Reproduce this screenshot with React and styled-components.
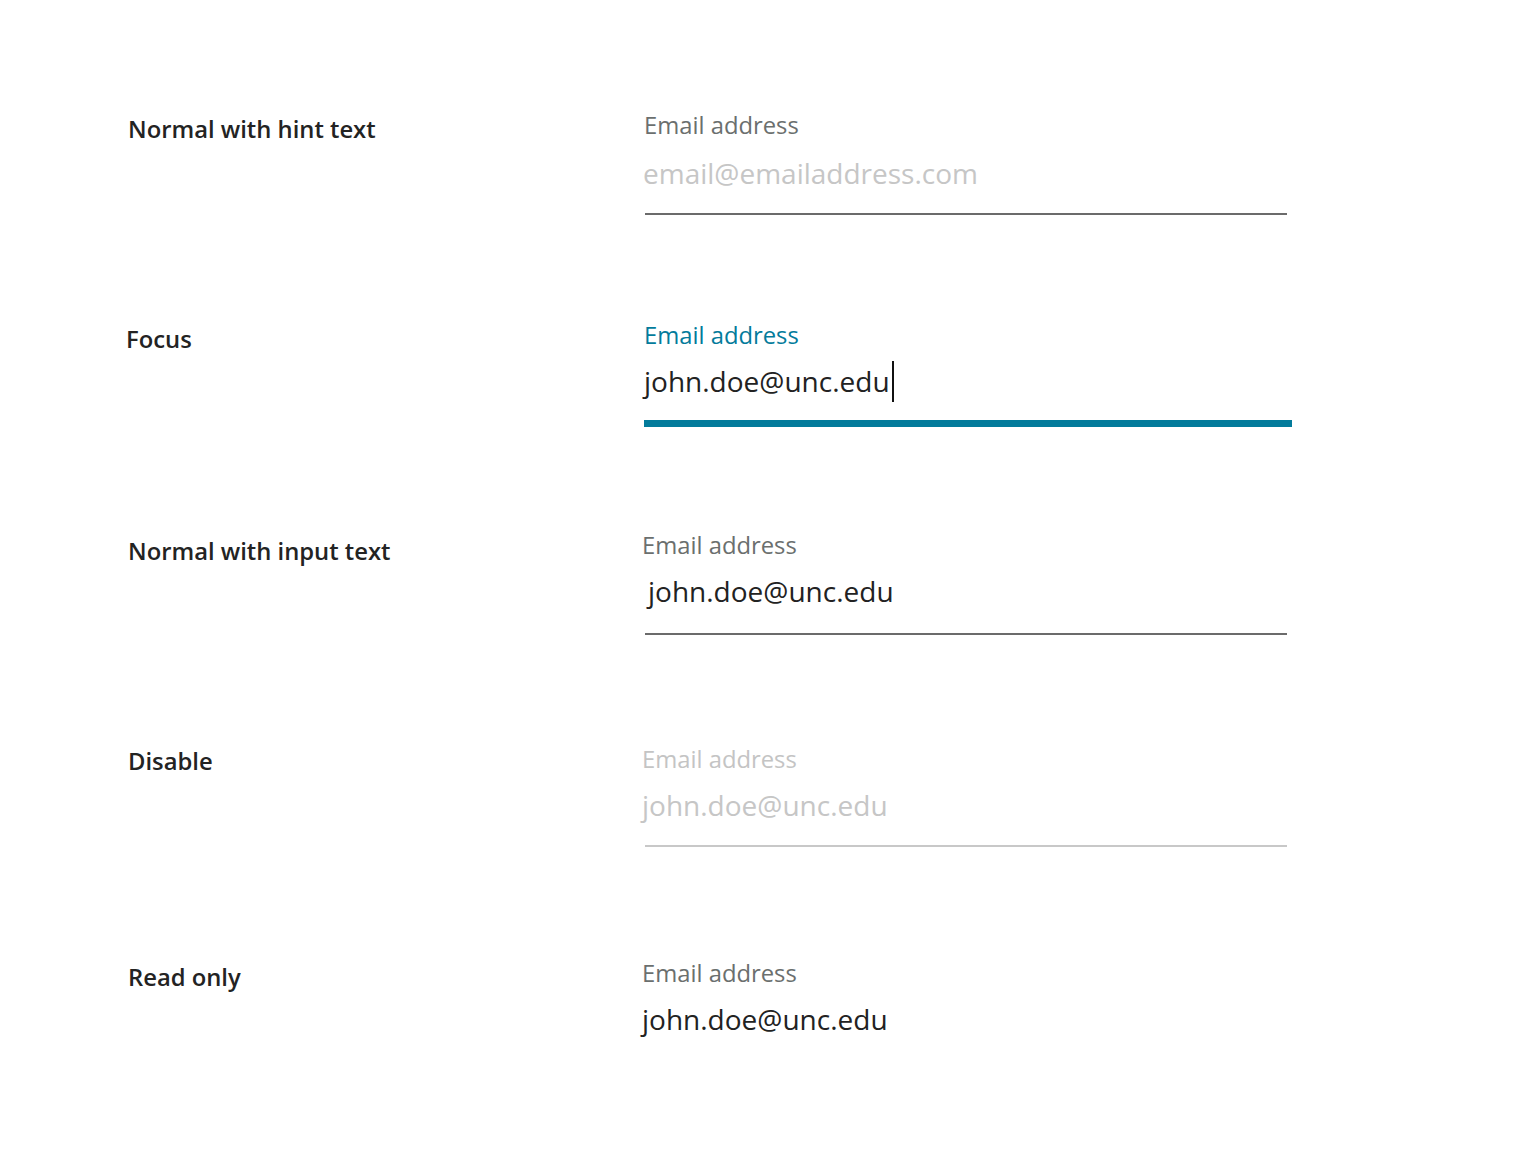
import React from 'react';
import styled, { createGlobalStyle } from 'styled-components';

const GlobalStyle = createGlobalStyle`
  html, body {
    margin: 0;
    padding: 0;
    background: #ffffff;
    font-family: "Open Sans", "Noto Sans", sans-serif;
  }
`;

const Page = styled.div`
  display: flex;
  flex-direction: column;
  padding: 110px 0 0 128px;
  width: 1520px;
  height: 1174px;
  box-sizing: border-box;
`;

const Row = styled.div`
  display: flex;
  align-items: flex-start;
  height: ${props => props.height || 210}px;
`;

const StateLabel = styled.div`
  width: 517px;
  margin-left: ${props => props.shift || 0}px;
  margin-right: ${props => -(props.shift || 0)}px;
  padding-top: ${props => props.top || 4}px;
  font-size: 23.8px;
  line-height: 30px;
  font-weight: 600;
  color: #232323;
`;

const Field = styled.div`
  display: flex;
  flex-direction: column;
  width: 642px;
`;

const FieldLabel = styled.div`
  font-size: 23.8px;
  line-height: 30px;
  margin-left: ${props => props.shift || 0}px;
  color: ${props =>
    props.state === 'focus' ? '#037b9b' :
    props.state === 'disabled' ? '#c4c4c4' : '#6b6f6e'};
`;

const Value = styled.div`
  display: flex;
  align-items: center;
  margin-top: ${props => props.gap || 12}px;
  margin-left: ${props => props.shift || 0}px;
  font-size: 28px;
  line-height: 38px;
  height: 38px;
  color: ${props =>
    props.state === 'hint' || props.state === 'disabled' ? '#c6c6c6' : '#222222'};
`;

const Caret = styled.span`
  display: inline-block;
  width: 2px;
  height: 41px;
  margin-left: 2px;
  background: #111111;
`;

const Underline = styled.div`
  margin-top: ${props => props.gap || 21}px;
  height: ${props => (props.state === 'focus' ? 7 : 2)}px;
  width: ${props => (props.state === 'focus' ? 648 : 642)}px;
  margin-left: ${props => (props.state === 'focus' ? -1 : 0)}px;
  background: ${props =>
    props.state === 'focus' ? '#037b9b' :
    props.state === 'disabled' ? '#c8c8c8' : '#6b6b6b'};
`;

const rows = [
  { title: 'Normal with hint text', state: 'hint', value: 'email@emailaddress.com', labelShift: -1, valueShift: -2, gap: 14 },
  { title: 'Focus', state: 'focus', value: 'john.doe@unc.edu', titleShift: -2, labelShift: -1, valueShift: -1, lineGap: 20 },
  { title: 'Normal with input text', state: 'normal', value: 'john.doe@unc.edu', labelShift: -3, valueShift: 3, top: 6, height: 214, lineGap: 23 },
  { title: 'Disable', state: 'disabled', value: 'john.doe@unc.edu', labelShift: -3, valueShift: -3, top: 2, height: 214 },
  { title: 'Read only', state: 'readonly', value: 'john.doe@unc.edu', labelShift: -3, valueShift: -3, height: 214 },
];

export default function App() {
  return (
    <>
      <GlobalStyle />
      <Page>
        {rows.map(row => (
          <Row key={row.title} height={row.height}>
            <StateLabel shift={row.titleShift} top={row.top}>{row.title}</StateLabel>
            <Field>
              <FieldLabel state={row.state} shift={row.labelShift}>Email address</FieldLabel>
              <Value state={row.state} shift={row.valueShift} gap={row.gap}>
                {row.value}
                {row.state === 'focus' && <Caret />}
              </Value>
              {row.state !== 'readonly' && <Underline state={row.state} gap={row.lineGap} />}
            </Field>
          </Row>
        ))}
      </Page>
    </>
  );
}
